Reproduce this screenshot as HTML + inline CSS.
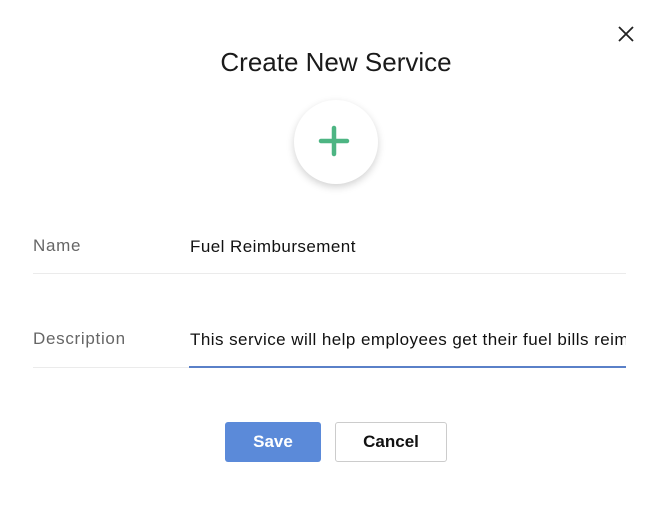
<!DOCTYPE html>
<html><head><style>
body{margin:0;width:662px;height:514px;background:#fff;font-family:"Liberation Sans",sans-serif;position:relative;overflow:hidden}
.a{position:absolute}
.t{left:0;width:672px;text-align:center;top:47px;font-size:26px;color:#1a1a1a}
.circ{left:294px;top:100px;width:84px;height:84px;border-radius:50%;background:#fff;box-shadow:0 3px 8px rgba(0,0,0,.18)}
.lbl{font-size:17px;color:#666;left:33px;letter-spacing:0.7px}
.val{font-size:17px;color:#111;left:190px;white-space:nowrap;letter-spacing:0.45px}
.line{height:1px;background:#ebebeb}
.btn{box-sizing:border-box;font-size:17px;font-weight:bold;text-align:center;border-radius:3px}
</style></head><body>
<svg class="a" style="left:617px;top:25px" width="18" height="18" viewBox="0 0 18 18"><path d="M2 2L16 16M16 2L2 16" stroke="#222" stroke-width="1.8"/></svg>
<div class="a t">Create New Service</div>
<div class="a circ"></div>
<svg class="a" style="left:318px;top:125px" width="32" height="32" viewBox="0 0 32 32"><path d="M16 3V29M3 16H29" stroke="#4db583" stroke-width="4.5" stroke-linecap="round"/></svg>
<div class="a lbl" style="top:236px">Name</div>
<div class="a val" style="top:237px">Fuel Reimbursement</div>
<div class="a line" style="left:33px;top:273px;width:593px"></div>
<div class="a lbl" style="top:329px">Description</div>
<div class="a val" style="top:330px;width:436px;overflow:hidden"><span style="border-left:1px solid #333;margin-left:-1px"></span>This service will help employees get their fuel bills reimbursed</div>
<div class="a line" style="left:33px;top:367px;width:156px"></div>
<div class="a" style="left:189px;top:366px;width:437px;height:2px;background:#5a80c8"></div>
<div class="a btn" style="left:225px;top:422px;width:96px;height:40px;line-height:40px;background:#5b8ad9;color:#fff">Save</div>
<div class="a btn" style="left:335px;top:422px;width:112px;height:40px;line-height:38px;border:1px solid #ccc;color:#111">Cancel</div>
</body></html>
